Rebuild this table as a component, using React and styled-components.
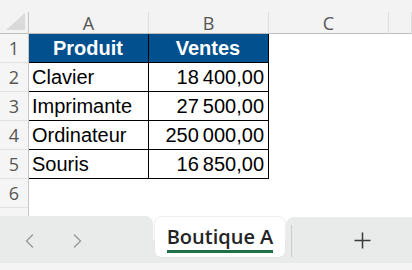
import React from 'react';
import styled, { createGlobalStyle, css } from 'styled-components';

const Global = createGlobalStyle`
  html, body { margin: 0; padding: 0; background: #fff; }
  body { width: 412px; height: 270px; overflow: hidden; }
`;

const Window = styled.div`
  width: 412px;
  height: 270px;
  display: flex;
  flex-direction: column;
  overflow: hidden;
  font-family: "Liberation Sans", Arial, sans-serif;
`;

const TopStrip = styled.div`
  flex: none;
  height: 12px;
  background: #f3f3f3;
`;

const Sheet = styled.div`
  flex: 1;
  min-height: 0;
  overflow: hidden;
  display: grid;
  grid-template-columns: 29px 120px 120px 120px 1fr;
  grid-template-rows: 22px repeat(7, 29px);
  align-content: start;
`;

const headFont = css`
  font-family: "Open Sans", "Noto Sans", sans-serif;
  font-size: 18px;
  color: #555;
`;

const Corner = styled.div`
  box-sizing: border-box;
  background: #f3f3f3;
  border-right: 1px solid #c4c4c4;
  border-bottom: 1px solid #bdbdbd;
  display: flex;
  align-items: flex-end;
  justify-content: flex-end;
  padding: 0 3px 3px 0;
`;

const ColHead = styled.div`
  box-sizing: border-box;
  background: #f3f3f3;
  border-right: 1px solid #dcdcdc;
  border-bottom: 1px solid #bdbdbd;
  display: flex;
  align-items: center;
  justify-content: center;
  ${headFont}
`;

const RowHead = styled.div`
  box-sizing: border-box;
  background: #f5f5f5;
  border-right: 1px solid #c4c4c4;
  border-bottom: 1px solid #e1e1e1;
  display: flex;
  align-items: center;
  justify-content: center;
  ${headFont}
`;

const Cell = styled.div`
  box-sizing: border-box;
  line-height: 28px;
  font-size: 20px;
  white-space: nowrap;
  overflow: hidden;
  padding: 0 4px 0 3px;
  color: #000;
  text-align: ${(p) => p.$align || 'left'};
  ${(p) =>
    p.$variant !== 'empty' &&
    css`
      border-right: 1px solid #000;
      border-bottom: 1px solid #000;
    `}
  ${(p) =>
    p.$variant === 'head' &&
    css`
      background: #03508e;
      color: #fff;
      font-weight: 700;
      text-align: center;
    `}
`;

const TabBar = styled.div`
  flex: none;
  height: 47px;
  display: flex;
  background: linear-gradient(#fff 0 50%, #e9ebeb 50%);
`;

const NavGroup = styled.div`
  width: 153px;
  background: #e9ebeb;
  border-top-right-radius: 8px;
  display: flex;
  align-items: center;
  padding-left: 5px;
  padding-top: 2px;
  box-sizing: border-box;
`;

const NavButton = styled.div`
  width: 48px;
  display: flex;
  align-items: center;
  justify-content: center;
`;

const TabSlot = styled.div`
  padding: 1px 1px 6px 2px;
  display: flex;
`;

const ActiveTab = styled.div`
  width: 130px;
  background: #fff;
  border-radius: 6px;
  box-shadow: 0 0 0 0.5px #dedede;
  display: flex;
  justify-content: center;
  align-items: flex-start;
  padding-top: 7px;
  box-sizing: border-box;
`;

const TabLabel = styled.div`
  font-family: "Open Sans", "Noto Sans", sans-serif;
  font-weight: 600;
  font-size: 20px;
  line-height: 26px;
  color: #242424;
  border-bottom: 3px solid #1e7145;
  white-space: nowrap;
`;

const RightGroup = styled.div`
  flex: 1;
  margin-top: 1px;
  background: #e9ebeb;
  border-top-left-radius: 8px;
  display: flex;
  align-items: center;
  padding-left: 5px;
`;

const Divider = styled.div`
  align-self: flex-start;
  margin-top: 8px;
  width: 1px;
  height: 32px;
  background: #cbcbcb;
`;

const AddButton = styled.div`
  margin-left: 62px;
  padding-top: 1px;
  display: flex;
  align-items: center;
  justify-content: center;
`;

const BottomStrip = styled.div`
  flex: none;
  height: 7px;
  background: #f4f4f4;
`;

const rows = [
  { name: 'Produit', value: 'Ventes', head: true },
  { name: 'Clavier', value: '18\u202F400,00' },
  { name: 'Imprimante', value: '27\u202F500,00' },
  { name: 'Ordinateur', value: '250\u202F000,00' },
  { name: 'Souris', value: '16\u202F850,00' },
];

const Chevron = ({ dir }) => (
  <svg width="9" height="14" viewBox="0 0 9 14">
    <path
      d={dir === 'left' ? 'M7.5 1 L1.5 7 L7.5 13' : 'M1.5 1 L7.5 7 L1.5 13'}
      fill="none"
      stroke="#9c9c9c"
      strokeWidth="1.5"
      strokeLinecap="round"
      strokeLinejoin="round"
    />
  </svg>
);

export default function App() {
  return (
    <Window>
      <Global />
      <TopStrip />
      <Sheet>
        <Corner>
          <svg width="19" height="17" viewBox="0 0 19 17">
            <path d="M19 0 L19 17 L0 17 Z" fill="#dadada" />
          </svg>
        </Corner>
        <ColHead>A</ColHead>
        <ColHead>B</ColHead>
        <ColHead>C</ColHead>
        <ColHead />
        {rows.map((r, i) => (
          <React.Fragment key={i}>
            <RowHead>{i + 1}</RowHead>
            <Cell $variant={r.head ? 'head' : 'data'}>{r.name}</Cell>
            <Cell $variant={r.head ? 'head' : 'data'} $align="right">
              {r.value}
            </Cell>
            <Cell $variant="empty" />
            <Cell $variant="empty" />
          </React.Fragment>
        ))}
        <RowHead>6</RowHead>
        <Cell $variant="empty" />
        <Cell $variant="empty" />
        <Cell $variant="empty" />
        <Cell $variant="empty" />
        <RowHead />
      </Sheet>
      <TabBar>
        <NavGroup>
          <NavButton>
            <Chevron dir="left" />
          </NavButton>
          <NavButton>
            <Chevron dir="right" />
          </NavButton>
        </NavGroup>
        <TabSlot>
          <ActiveTab>
            <TabLabel>Boutique A</TabLabel>
          </ActiveTab>
        </TabSlot>
        <RightGroup>
          <Divider />
          <AddButton>
            <svg width="17" height="17" viewBox="0 0 17 17">
              <path d="M8.5 0.5 V16.5 M0.5 8.5 H16.5" stroke="#3a3a3a" strokeWidth="1.5" />
            </svg>
          </AddButton>
        </RightGroup>
      </TabBar>
      <BottomStrip />
    </Window>
  );
}
